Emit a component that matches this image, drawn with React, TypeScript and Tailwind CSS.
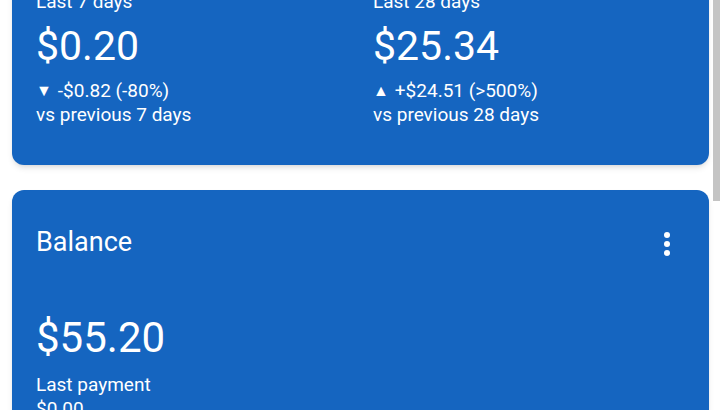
type Period = {
  label: string;
  amount: string;
  change: string;
  up: boolean;
  compare: string;
};

const periods: Period[] = [
  { label: "Last 7 days", amount: "$0.20", change: "-$0.82 (-80%)", up: false, compare: "vs previous 7 days" },
  { label: "Last 28 days", amount: "$25.34", change: "+$24.51 (>500%)", up: true, compare: "vs previous 28 days" },
];

function MoreIcon() {
  return (
    <svg width="8" height="26" viewBox="0 0 8 26" fill="currentColor">
      <circle cx="4" cy="4" r="3" />
      <circle cx="4" cy="13" r="3" />
      <circle cx="4" cy="22" r="3" />
    </svg>
  );
}

function PeriodStat({ period }: { period: Period }) {
  return (
    <div>
      <p className="text-[19px] leading-[24px]">{period.label}</p>
      <p className="mt-2 text-[41px] leading-[48px]">{period.amount}</p>
      <p className="mt-[9px] flex items-center text-[19px] leading-[24px]">
        <span className="mr-[6px] text-[16px]">{period.up ? "▲" : "▼"}</span>
        {period.change}
      </p>
      <p className="text-[19px] leading-[24px]">{period.compare}</p>
    </div>
  );
}

export default function App() {
  return (
    <div className="relative h-[410px] w-[720px] overflow-hidden bg-white font-['Roboto',sans-serif] text-white">
      <div className="-mt-[34px] pl-3 pr-[11px]">
        <section className="rounded-xl bg-[#1565c0] px-6 pb-[38px] pt-6 shadow-md">
          <div className="grid grid-cols-2 gap-[25px]">
            {periods.map((period) => <PeriodStat key={period.label} period={period} />)}
          </div>
        </section>

        <section className="mt-[25px] rounded-xl bg-[#1565c0] px-6 pb-8 pt-8 shadow-md">
          <div className="flex h-10 items-center justify-between">
            <h2 className="text-[27px] leading-8">Balance</h2>
            <button type="button" className="-mr-[2px] mt-1 flex h-10 w-10 items-center justify-center text-white">
              <MoreIcon />
            </button>
          </div>
          <p className="mt-[52px] text-[42px] leading-[48px]">$55.20</p>
          <p className="mt-[11px] text-[19px] leading-[24px]">Last payment</p>
          <p className="text-[19px] leading-[24px]">$0.00</p>
        </section>
      </div>

      {/* scrollbar thumb */}
      <div className="absolute right-0 top-0 h-[201px] w-[7px] bg-[#c4c4c4]" />
    </div>
  );
}
